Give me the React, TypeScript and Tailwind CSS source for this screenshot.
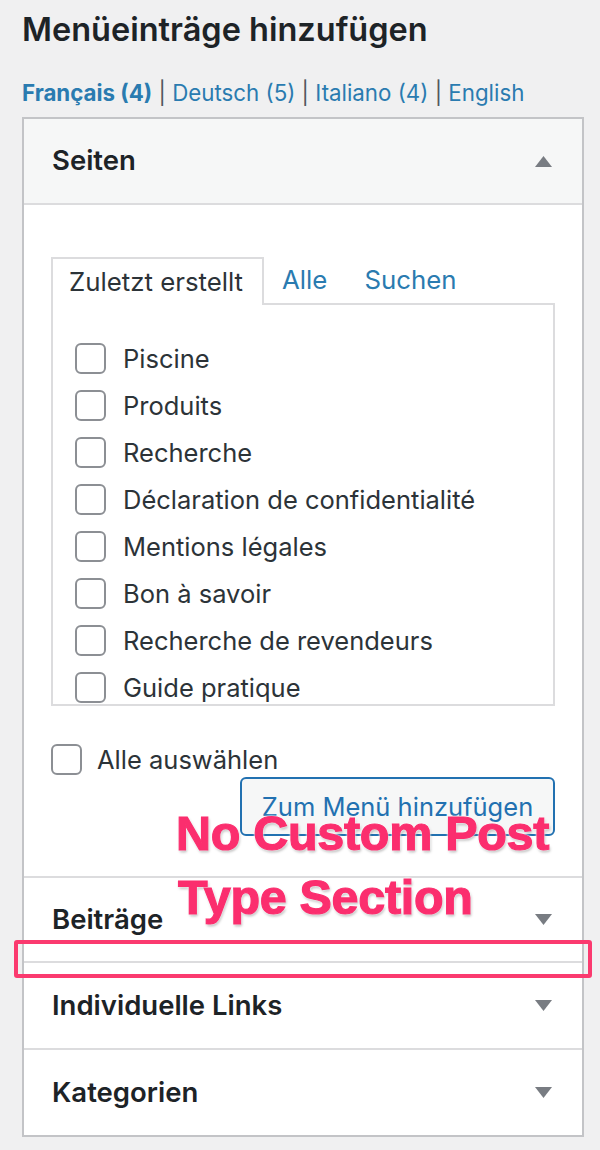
import React from 'react';

const PAGES = [
  'Piscine',
  'Produits',
  'Recherche',
  'Déclaration de confidentialité',
  'Mentions légales',
  'Bon à savoir',
  'Recherche de revendeurs',
  'Guide pratique',
];

const Box = ({ className = '' }: { className?: string }) => (
  <span
    className={`inline-block w-[31px] h-[31px] shrink-0 rounded-[6px] border-2 border-[#8c8f94] bg-white ${className}`}
  />
);

const Arrow = ({ up = false }: { up?: boolean }) => (
  <svg width="17" height="11" viewBox="0 0 17 11" className="shrink-0">
    {up ? (
      <polygon points="8.5,0 17,11 0,11" fill="#787c82" />
    ) : (
      <polygon points="0,0 17,0 8.5,11" fill="#787c82" />
    )}
  </svg>
);

const Section = ({ title, h }: { title: string; h: string }) => (
  <div className={`${h} flex items-center justify-between pl-[28px] pr-[30px] border-t-2 border-[#dcdcde] bg-white`}>
    <h3 className="text-[27.5px] font-semibold text-[#1d2327]">{title}</h3>
    <Arrow />
  </div>
);

export default function App() {
  return (
    <div className="relative w-[600px] h-[1150px] bg-[#f0f0f1] pl-[22px] pr-[16px] font-['Inter',sans-serif] text-[#2c3338]">
      {/* Heading */}
      <h2 className="pt-[10px] text-[32.5px] leading-[40px] font-semibold text-[#1d2327]">
        Menüeinträge hinzufügen
      </h2>
      <p className="mt-[30px] text-[22.3px] leading-[26px] text-[#2a7bb0]">
        <span className="font-bold">Français (4)</span>
        <span className="text-[#50575e]"> | </span>
        Deutsch (5)
        <span className="text-[#50575e]"> | </span>
        Italiano (4)
        <span className="text-[#50575e]"> | </span>
        English
      </p>

      {/* Panel */}
      <div className="mt-[11px] border-2 border-[#c3c4c7] bg-white">
        <div className="h-[86px] flex items-center justify-between pl-[28px] pr-[30px] bg-[#f6f7f7] border-b-2 border-[#dcdcde]">
          <h3 className="text-[27.5px] font-semibold text-[#1d2327]">Seiten</h3>
          <Arrow up />
        </div>

        <div className="px-[27px] pt-[52px] pb-[40px]">
          {/* Tabs */}
          <div className="flex items-end h-[46px]">
            <div className="h-[48px] -mb-[2px] pl-[16px] pr-[19px] flex items-center border-2 border-b-0 border-[#dcdcde] bg-white relative z-10 text-[25.8px] text-[#2c3338]">
              Zuletzt erstellt
            </div>
            <span className="h-[46px] flex items-center ml-[18px] text-[25.8px] text-[#2a7bb0]">Alle</span>
            <span className="h-[46px] flex items-center ml-[37px] text-[25.8px] text-[#2a7bb0]">Suchen</span>
          </div>
          <div className="h-[403px] overflow-hidden border-2 border-[#dcdcde] pl-[22px] pt-[30px]">
            <ul className="flex flex-col">
              {PAGES.map((p) => (
                <li key={p} className="h-[47px] shrink-0 flex items-center gap-[17px] text-[25.5px] leading-[30px]">
                  <Box />
                  <span>{p}</span>
                </li>
              ))}
            </ul>
          </div>

          <div className="mt-[38px] flex items-center gap-[15px] text-[25.5px] leading-[30px]">
            <Box />
            <span>Alle auswählen</span>
          </div>
          <div className="flex justify-end mt-[2px]">
            <button className="w-[315px] h-[59px] pt-[2px] rounded-[6px] border-2 border-[#2271b1] bg-[#f6f7f7] text-[25.5px] text-[#2271b1]">
              Zum Menü hinzufügen
            </button>
          </div>
        </div>

        <Section title="Beiträge" h="h-[85px]" />
        <Section title="Individuelle Links" h="h-[87px]" />
        <Section title="Kategorien" h="h-[87px]" />
      </div>

      {/* Annotation */}
      <div className="absolute left-[176px] top-[801px] font-['Liberation_Sans',Arial,sans-serif] font-bold text-[48.5px] leading-[64px] text-[#fb2e6e] tracking-[-0.3px] [-webkit-text-stroke:1.2px_#fb2e6e] [text-shadow:0_0_2px_#fff,0_0_3px_#fff,0_0_3px_#fff,1px_2px_3px_rgba(0,0,0,0.35)]">
        <div>No Custom Post</div>
        <div className="ml-[2px]">Type Section</div>
      </div>
      <div className="absolute left-[14px] top-[940px] w-[578px] h-[38px] border-[4px] border-[#fb3a6f] rounded-[3px]" />
    </div>
  );
}
